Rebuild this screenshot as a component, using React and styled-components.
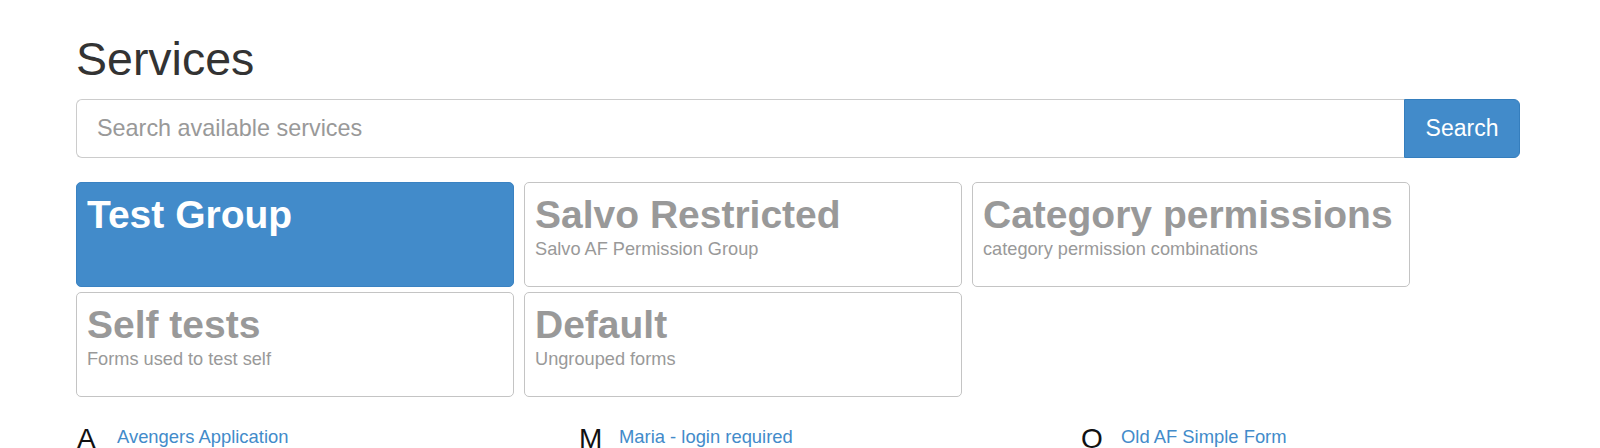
import React, { useState } from "react";
import styled, { createGlobalStyle } from "styled-components";

const GlobalStyle = createGlobalStyle`
    body {
        margin: 0;
        background: #fff;
        font-family: "Liberation Sans", Arial, Helvetica, sans-serif;
        color: #333;
    }
    * {
        box-sizing: border-box;
    }
`;

const Wrapper = styled.div`
    width: 1444px;
    margin-left: 76px;
    padding-top: 34px;
`;

const Title = styled.h1`
    margin: 0;
    font-size: 46.5px;
    line-height: 1.1;
    font-weight: 400;
    color: #333;
`;

const SearchBar = styled.form`
    display: flex;
    margin-top: 14px;
    height: 59px;
`;

const SearchInput = styled.input`
    flex: 1;
    height: 100%;
    padding: 0 20px;
    border: 1px solid #ccc;
    border-right: none;
    border-radius: 6px 0 0 6px;
    font-family: inherit;
    font-size: 23.4px;
    color: #555;
    outline: none;

    &::placeholder {
        color: #999;
    }
`;

const SearchButton = styled.button`
    width: 116px;
    height: 100%;
    border: 1px solid #357ebd;
    border-radius: 0 6px 6px 0;
    background: #428bca;
    color: #fff;
    font-family: inherit;
    font-size: 23px;
    cursor: pointer;
`;

const Groups = styled.div`
    display: grid;
    grid-template-columns: repeat(3, 438px);
    column-gap: 10px;
    row-gap: 5px;
    margin-top: 24px;
`;

const GroupCard = styled.div`
    height: 105px;
    padding: 11px 10px;
    border: 1px solid ${(p) => (p.$active ? "#3a82c2" : "#c4c4c4")};
    border-radius: 5px;
    background: ${(p) => (p.$active ? "#428bca" : "#fff")};
    color: ${(p) => (p.$active ? "#fff" : "#999")};
    cursor: pointer;
`;

const GroupName = styled.div`
    font-size: 39px;
    line-height: 1.1;
    font-weight: 700;
    white-space: nowrap;
`;

const GroupDesc = styled.div`
    font-size: 18.2px;
    line-height: 25px;
`;

const Index = styled.div`
    display: grid;
    grid-template-columns: repeat(3, 502px);
    margin-top: 27px;
`;

const IndexRow = styled.div`
    display: flex;
    align-items: flex-start;
    padding-left: 1px;
`;

const Letter = styled.div`
    width: 40px;
    font-size: 28px;
    line-height: 1.1;
    color: #111;
`;

const FormLink = styled.a`
    font-size: 18.4px;
    line-height: 25px;
    color: #428bca;
    text-decoration: none;
`;

const groups = [
    { name: "Test Group", desc: "" },
    { name: "Salvo Restricted", desc: "Salvo AF Permission Group" },
    { name: "Category permissions", desc: "category permission combinations" },
    { name: "Self tests", desc: "Forms used to test self" },
    { name: "Default", desc: "Ungrouped forms" },
];

const forms = [
    { letter: "A", title: "Avengers Application" },
    { letter: "M", title: "Maria - login required" },
    { letter: "O", title: "Old AF Simple Form" },
];

function App() {
    const [query, setQuery] = useState("");
    const [active, setActive] = useState(0);

    return (
        <>
            <GlobalStyle />
            <Wrapper>
                <Title>Services</Title>
                <SearchBar onSubmit={(e) => e.preventDefault()}>
                    <SearchInput
                        type="text"
                        placeholder="Search available services"
                        value={query}
                        onChange={(e) => setQuery(e.target.value)}
                    />
                    <SearchButton type="submit">Search</SearchButton>
                </SearchBar>
                <Groups>
                    {groups.map((g, i) => (
                        <GroupCard key={g.name} $active={i === active} onClick={() => setActive(i)}>
                            <GroupName>{g.name}</GroupName>
                            {g.desc && <GroupDesc>{g.desc}</GroupDesc>}
                        </GroupCard>
                    ))}
                </Groups>
                <Index>
                    {forms.map((f) => (
                        <IndexRow key={f.letter}>
                            <Letter>{f.letter}</Letter>
                            <FormLink href="#">{f.title}</FormLink>
                        </IndexRow>
                    ))}
                </Index>
            </Wrapper>
        </>
    );
}

export default App;
